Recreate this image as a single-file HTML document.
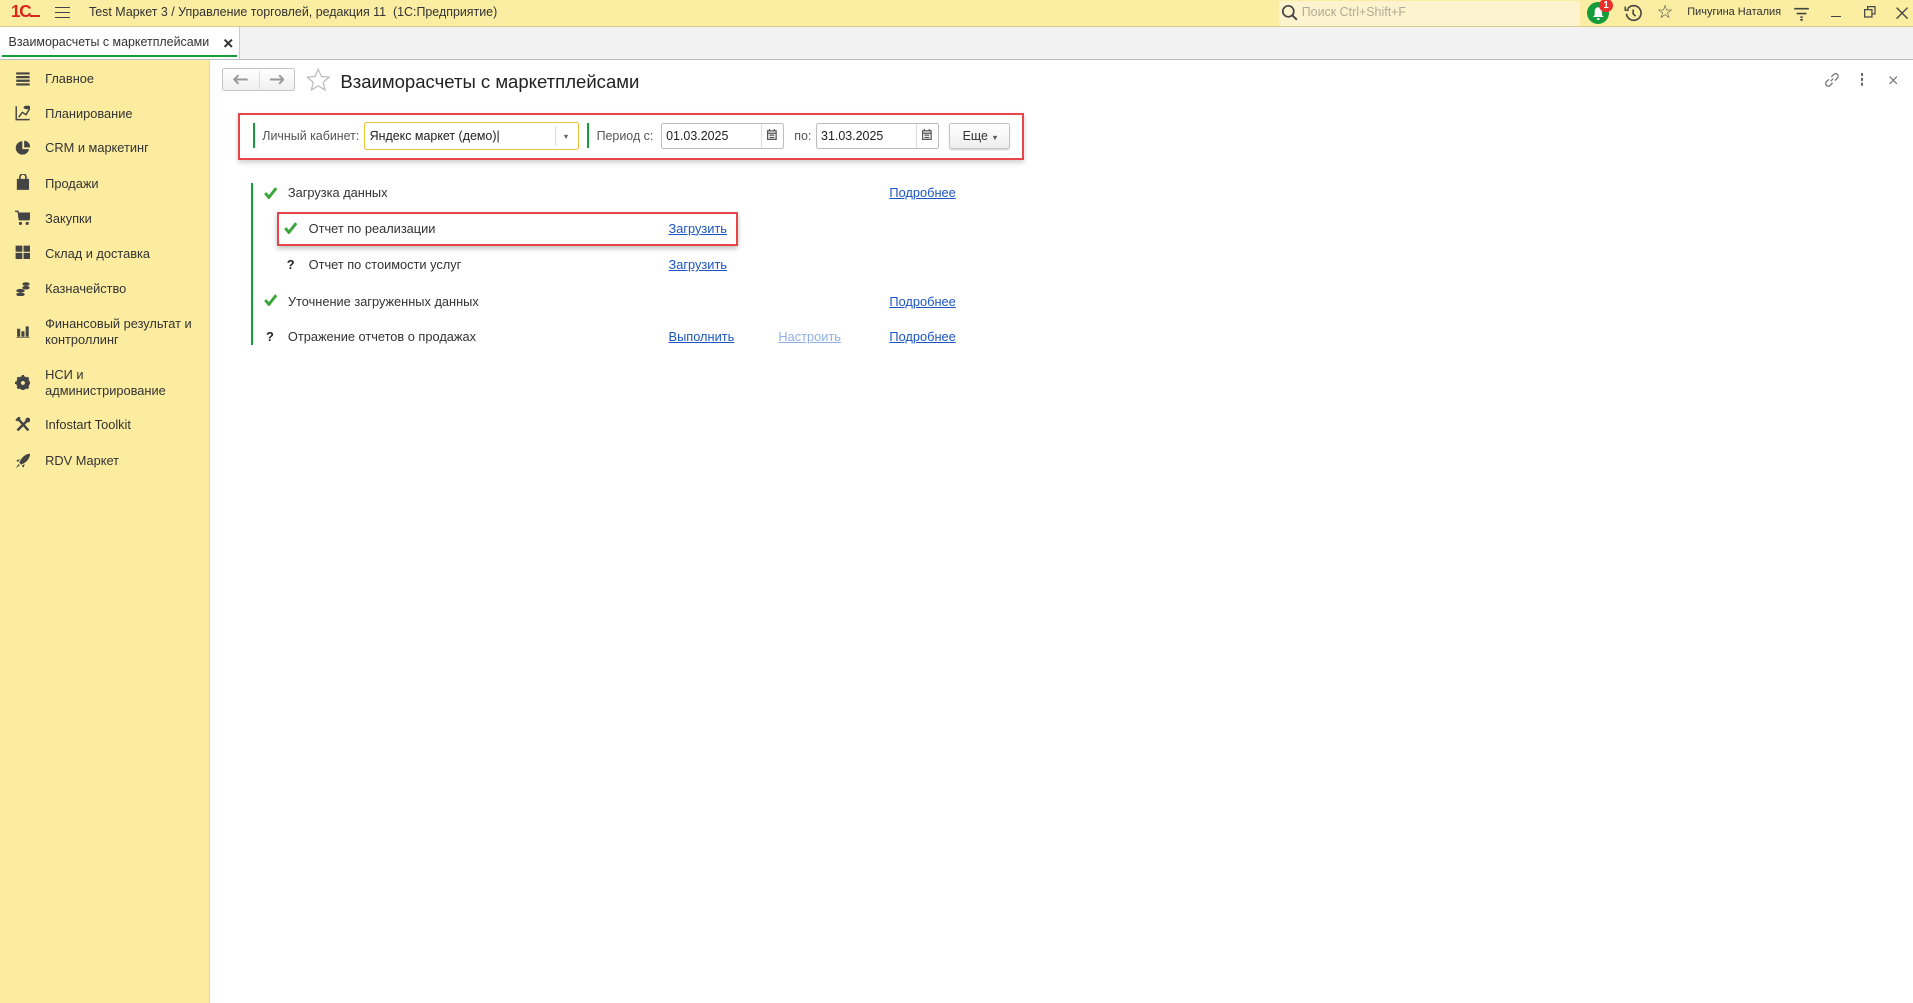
<!DOCTYPE html>
<html><head><meta charset="utf-8"><style>
html,body{margin:0;padding:0;width:1913px;height:1003px;overflow:hidden;background:#fff}
#w{position:relative;width:1568px;height:822px;zoom:1.22;font-family:"Liberation Sans",Arial,sans-serif;font-size:10.5px;color:#333}
.a{position:absolute}
#top{left:0;top:0;width:1568px;height:22px;background:#fbeda1;border-bottom:1px solid #d9c98c;box-sizing:border-box}
#tabs{left:0;top:22px;width:1568px;height:27px;background:#f2f2f2;border-bottom:1px solid #bdbdbd;box-sizing:border-box}
#side{left:0;top:49px;width:171px;height:773px;background:#fbeca0;border-right:1px solid #d6d6d6}
.si{position:absolute;left:37px;font-size:10.5px;color:#333;line-height:13px}
.ic{position:absolute;left:12px;width:13px;height:13px}
.lnk{color:#1c55c4;text-decoration:underline;position:absolute}
.t{position:absolute;color:#333;white-space:nowrap}
.inp{position:absolute;background:#fff;border:1px solid #bdbdbd;border-radius:2px;box-sizing:border-box;height:21px}
.ck{position:absolute;width:11px;height:10px}
</style></head><body><div id="w">
<div id="top" class="a">
  <div class="t" style="left:9px;top:2px;color:#d9251c;font-weight:bold;font-size:14px;letter-spacing:-1px">1С<span style="display:inline-block;width:8px;border-bottom:2px solid #d9251c"></span></div>
  <div class="a" style="left:45px;top:6px;width:12px;border-top:1.5px solid #444;border-bottom:1.5px solid #444;height:3px"></div>
  <div class="a" style="left:45px;top:14px;width:12px;border-top:1.5px solid #444"></div>
  <div class="t" style="left:73px;top:4px;font-size:10.2px;color:#333">Test Маркет 3 / Управление торговлей, редакция 11 &nbsp;(1С:Предприятие)</div>
  <div class="a" style="left:1048px;top:1px;width:247px;height:20px;background:#fdf4cf;border-radius:2px"></div>
  <svg class="a" style="left:1050px;top:3px" width="14" height="15" viewBox="0 0 14 15"><circle cx="6" cy="6" r="4.5" fill="none" stroke="#444" stroke-width="1.4"/><path d="M9 9l4 4" stroke="#444" stroke-width="1.6"/></svg>
  <div class="t" style="left:1067px;top:4px;color:#b0aa95;font-size:10.2px">Поиск Ctrl+Shift+F</div>
  <div class="a" style="left:1301px;top:2px;width:18px;height:18px;border-radius:50%;background:#159a3c"></div>
  <svg class="a" style="left:1304px;top:5px" width="12" height="12" viewBox="0 0 12 12"><path d="M6 1c2 0 3 1.5 3 3.5v3l1.5 1.5h-9L3 7.5v-3C3 2.5 4 1 6 1z M5 10h2v1.5H5z" fill="#fff"/></svg>
  <div class="a" style="left:1311px;top:-1px;width:11px;height:11px;border-radius:50%;background:#e8302a;color:#fff;font-size:8px;font-weight:bold;text-align:center;line-height:11px">1</div>
  <svg class="a" style="left:1331px;top:3px" width="15" height="15" viewBox="0 0 15 15"><path d="M3 4A6 6 0 1 1 2 8" fill="none" stroke="#444" stroke-width="1.3"/><path d="M1 2v3h3" fill="none" stroke="#444" stroke-width="1.2"/><path d="M7.5 4.5v3.5l2 2" fill="none" stroke="#444" stroke-width="1.3"/></svg>
  <div class="t" style="left:1358px;top:1px;font-size:15px;color:#444">☆</div>
  <div class="t" style="left:1383px;top:5px;font-size:9px;color:#333">Пичугина Наталия</div>
  <svg class="a" style="left:1470px;top:4px" width="14" height="14" viewBox="0 0 14 14"><path d="M1 3h12M3 7h8M6 10h2" stroke="#444" stroke-width="1.3"/><path d="M5.5 11.5h3L7 13.5z" fill="#444"/></svg>
  <div class="a" style="left:1501px;top:13px;width:8px;border-top:1px solid #444"></div>
  <svg class="a" style="left:1528px;top:5px" width="10" height="10"><rect x="0.5" y="3" width="6" height="6" fill="none" stroke="#444"/><path d="M3 3V0.5h6v6H6.5" fill="none" stroke="#444"/></svg>
  <svg class="a" style="left:1554px;top:6px" width="10" height="10"><path d="M0.5 .5l9 9M9.5 .5l-9 9" stroke="#444" stroke-width="1.1"/></svg>
</div>
<div id="tabs" class="a">
  <div class="a" style="left:0;top:0;width:196px;height:26px;background:#fff;border-right:1px solid #ccc"></div>
  <div class="a" style="left:2px;top:23px;width:192px;height:2px;background:#159a3c"></div>
  <div class="t" style="left:7px;top:7px;color:#333;font-size:10.2px">Взаиморасчеты с маркетплейсами</div>
  <svg class="a" style="left:184px;top:10px" width="7" height="7"><path d="M.5 .5l6 6M6.5 .5l-6 6" stroke="#333" stroke-width="1.6"/></svg>
</div>
<div id="side" class="a">
  <svg class="ic" style="top:9px" viewBox="0 0 13 13"><path d="M1 2h11M1 5h11M1 8h11M1 11h11" stroke="#444" stroke-width="1.8"/></svg>
  <div class="si" style="top:9px">Главное</div>
  <svg class="ic" style="top:37px" viewBox="0 0 13 13"><path d="M1 1v11h11M3 10l3-4 3 2 3-5" fill="none" stroke="#444" stroke-width="1.2"/><ellipse cx="10" cy="2" rx="3" ry="1.5" fill="#444"/></svg>
  <div class="si" style="top:38px">Планирование</div>
  <svg class="ic" style="top:66px" viewBox="0 0 13 13"><path d="M6 1a5.5 5.5 0 1 0 5.5 6.5H6z" fill="#444"/><path d="M7.5 0.5v5.5h5A5.5 5.5 0 0 0 7.5 .5z" fill="#444"/></svg>
  <div class="si" style="top:66px">CRM и маркетинг</div>
  <svg class="ic" style="top:94px" viewBox="0 0 13 13"><rect x="1.5" y="4" width="10" height="9" fill="#444"/><path d="M4 5V2.5a2.5 2.5 0 0 1 5 0V5" fill="none" stroke="#444" stroke-width="1.3"/></svg>
  <div class="si" style="top:95px">Продажи</div>
  <svg class="ic" style="top:123px" viewBox="0 0 13 13"><path d="M0 1h2.5l1 7h8l1.5-5.5H3" fill="#444" stroke="#444"/><circle cx="4.5" cy="11" r="1.3" fill="#444"/><circle cx="10" cy="11" r="1.3" fill="#444"/></svg>
  <div class="si" style="top:124px">Закупки</div>
  <svg class="ic" style="top:152px" viewBox="0 0 13 13"><path d="M0.5 0.5h5.5v5h-5.5zM7 .5h5.5v5H7zM.5 6.5h5.5v5H.5zM7 6.5h5.5v5H7z" fill="#444"/></svg>
  <div class="si" style="top:153px">Склад и доставка</div>
  <svg class="ic" style="top:181px" viewBox="0 0 13 13"><ellipse cx="9" cy="2.5" rx="3" ry="1.5" fill="#444"/><ellipse cx="9" cy="5.5" rx="3" ry="1.5" fill="#444"/><ellipse cx="4.5" cy="8" rx="3.5" ry="1.5" fill="#444"/><ellipse cx="4.5" cy="11" rx="3.5" ry="1.5" fill="#444"/></svg>
  <div class="si" style="top:181px">Казначейство</div>
  <svg class="ic" style="top:216px" viewBox="0 0 13 13"><path d="M1 12h11M2 5h2v6H2zM5.5 7h2v4h-2zM9 3h2v8H9z" fill="#444" stroke="#444" stroke-width=".5"/></svg>
  <div class="si" style="top:210px">Финансовый результат и<br>контроллинг</div>
  <svg class="ic" style="top:258px" viewBox="0 0 13 13"><circle cx="6.5" cy="6.5" r="4" fill="none" stroke="#444" stroke-width="3"/><path d="M6.5 0v13M0 6.5h13M2 2l9 9M11 2l-9 9" stroke="#444" stroke-width="2"/><circle cx="6.5" cy="6.5" r="1.6" fill="#fbeca0"/></svg>
  <div class="si" style="top:252px">НСИ и<br>администрирование</div>
  <svg class="ic" style="top:293px" viewBox="0 0 13 13"><path d="M2 11l8-8M3 2l8 9" stroke="#444" stroke-width="2"/><circle cx="10.5" cy="2.5" r="2" fill="#444"/><path d="M1 3l3-3" stroke="#444" stroke-width="2"/></svg>
  <div class="si" style="top:293px">Infostart Toolkit</div>
  <svg class="ic" style="top:322px" viewBox="0 0 13 13"><path d="M12.5 .5C8 1 5 4 3.5 8l1.5 1.5C9 8 12 5 12.5 .5z" fill="#444"/><path d="M3 9l-2.5 3.5L4 10z" fill="#444"/><path d="M4 5L1 6l1.5 1.5zM8 9l-1 3-1.5-1.5z" fill="#444"/></svg>
  <div class="si" style="top:322px">RDV Маркет</div>
</div>
<!-- content -->
<div class="a" style="left:182px;top:56px;width:60px;height:19px;border:1px solid #c4c4c4;border-radius:2px;background:linear-gradient(#fff,#f0f0f0);box-sizing:border-box"></div>
<div class="a" style="left:212px;top:58px;height:15px;border-left:1px solid #ddd"></div>
<svg class="a" style="left:191px;top:61px" width="12" height="9"><path d="M1 4.5h11M4.5 1L1 4.5 4.5 8" fill="none" stroke="#999" stroke-width="1.6"/></svg>
<svg class="a" style="left:221px;top:61px" width="12" height="9"><path d="M0 4.5h11M7.5 1L11 4.5 7.5 8" fill="none" stroke="#999" stroke-width="1.6"/></svg>
<svg class="a" style="left:251px;top:56px" width="20" height="19" viewBox="0 0 20 19"><path d="M10 1l2.6 6 6.4.5-4.9 4.2 1.5 6.3L10 14.6 4.4 18l1.5-6.3L1 7.5 7.4 7z" fill="none" stroke="#bbb" stroke-width="1"/></svg>
<div class="t" style="left:279px;top:58px;font-size:15.2px;color:#222">Взаиморасчеты с маркетплейсами</div>
<svg class="a" style="left:1495px;top:59px" width="13" height="13" viewBox="0 0 13 13"><path d="M5.5 7.5l2-2M4 6L2 8a2 2 0 0 0 3 3l2-2M9 7l2-2a2 2 0 0 0-3-3L6 4" fill="none" stroke="#777" stroke-width="1.1"/></svg>
<div class="a" style="left:1525px;top:60px;width:2px;height:2px;background:#666;box-shadow:0 4px #666,0 8px #666"></div>
<svg class="a" style="left:1548px;top:62px" width="7" height="7"><path d="M.5 .5l6 6M6.5 .5l-6 6" stroke="#777" stroke-width="1"/></svg>

<div class="a" style="left:195px;top:93px;width:644px;height:38px;border:2px solid #e8454a;box-sizing:border-box;box-shadow:0 2px 4px rgba(0,0,0,.2)"></div>
<div class="a" style="left:207px;top:101px;width:2px;height:20px;background:#159a3c"></div>
<div class="t" style="left:215px;top:106px;color:#555;font-size:10.2px">Личный кабинет:</div>
<div class="inp" style="left:298px;top:100px;width:177px;height:23px;border:1px solid #f0c23a"></div>
<div class="t" style="left:303px;top:106px;color:#222;font-size:10.2px">Яндекс маркет (демо)|</div>
<div class="a" style="left:455px;top:103px;height:17px;border-left:1px solid #ddd"></div>
<div class="t" style="left:461px;top:108px;color:#666;font-size:6px">▼</div>
<div class="a" style="left:481px;top:101px;width:2px;height:20px;background:#159a3c"></div>
<div class="t" style="left:489px;top:106px;color:#555;font-size:10.2px">Период с:</div>
<div class="inp" style="left:542px;top:101px;width:101px"></div>
<div class="t" style="left:546px;top:106px;color:#222;font-size:10.2px">01.03.2025</div>
<div class="a" style="left:624px;top:102px;height:19px;border-left:1px solid #ddd"></div>
<svg class="a" style="left:629px;top:106px" width="8" height="9"><rect x=".5" y="1.5" width="7" height="7" fill="none" stroke="#555"/><path d="M.5 3.5h7M2 0v2M6 0v2M2 5h4M2 7h4" stroke="#555"/></svg>
<div class="t" style="left:651px;top:106px;color:#555;font-size:10.2px">по:</div>
<div class="inp" style="left:669px;top:101px;width:101px"></div>
<div class="t" style="left:673px;top:106px;color:#222;font-size:10.2px">31.03.2025</div>
<div class="a" style="left:751px;top:102px;height:19px;border-left:1px solid #ddd"></div>
<svg class="a" style="left:756px;top:106px" width="8" height="9"><rect x=".5" y="1.5" width="7" height="7" fill="none" stroke="#555"/><path d="M.5 3.5h7M2 0v2M6 0v2M2 5h4M2 7h4" stroke="#555"/></svg>
<div class="a" style="left:778px;top:101px;width:50px;height:21px;border:1px solid #c4c4c4;border-radius:2px;background:linear-gradient(#fff,#eee);box-sizing:border-box;box-shadow:0 1px 1px rgba(0,0,0,.15)"></div>
<div class="t" style="left:789px;top:106px;color:#333;font-size:10.2px">Еще <span style="font-size:6px;color:#555">▼</span></div>

<div class="a" style="left:206px;top:150px;width:1.5px;height:133px;background:#159a3c"></div>
<div class="a" style="left:227px;top:174px;width:378px;height:28px;border:2px solid #e8454a;box-sizing:border-box;box-shadow:0 2px 4px rgba(0,0,0,.25)"></div>
<svg class="ck" style="left:216px;top:153px" viewBox="0 0 11 10"><path d="M1 5l3 3.5L10 1" fill="none" stroke="#3aa63a" stroke-width="2.4"/></svg>
<div class="t" style="left:236px;top:152px">Загрузка данных</div>
<a class="lnk" style="left:729px;top:152px">Подробнее</a>
<svg class="ck" style="left:233px;top:182px" viewBox="0 0 11 10"><path d="M1 5l3 3.5L10 1" fill="none" stroke="#3aa63a" stroke-width="2.4"/></svg>
<div class="t" style="left:253px;top:181px">Отчет по реализации</div>
<a class="lnk" style="left:548px;top:181px">Загрузить</a>
<div class="t" style="left:235px;top:211px;color:#222;font-weight:bold">?</div>
<div class="t" style="left:253px;top:211px">Отчет по стоимости услуг</div>
<a class="lnk" style="left:548px;top:211px">Загрузить</a>
<svg class="ck" style="left:216px;top:241px" viewBox="0 0 11 10"><path d="M1 5l3 3.5L10 1" fill="none" stroke="#3aa63a" stroke-width="2.4"/></svg>
<div class="t" style="left:236px;top:241px">Уточнение загруженных данных</div>
<a class="lnk" style="left:729px;top:241px">Подробнее</a>
<div class="t" style="left:218px;top:270px;color:#222;font-weight:bold">?</div>
<div class="t" style="left:236px;top:270px">Отражение отчетов о продажах</div>
<a class="lnk" style="left:548px;top:270px">Выполнить</a>
<a class="lnk" style="left:638px;top:270px;color:#8fb0e6">Настроить</a>
<a class="lnk" style="left:729px;top:270px">Подробнее</a>
</div></body></html>
